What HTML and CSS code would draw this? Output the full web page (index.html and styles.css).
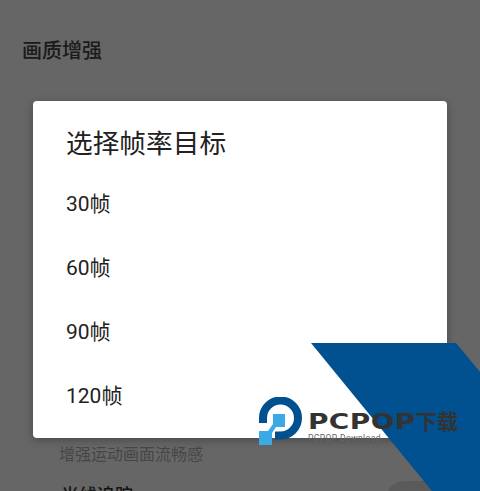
FILE: index.html
```html
<!DOCTYPE html>
<html lang="zh">
<head>
<meta charset="utf-8">
<title>选择帧率目标</title>
<link rel="stylesheet" href="styles.css">
</head>
<body>
<main class="page">
  <h2 class="section">画质增强</h2>
  <div class="rows">
    <span class="toggle toggle-upper"></span>
    <p class="hint">增强运动画面流畅感</p>
    <div class="row">
      <span class="row-title">光线追踪</span>
      <span class="toggle"></span>
    </div>
  </div>
</main>
<div class="scrim"></div>
<section class="dialog">
  <h1 class="dialog-title">选择帧率目标</h1>
  <ul class="options">
    <li class="option">30帧</li>
    <li class="option">60帧</li>
    <li class="option">90帧</li>
    <li class="option">120帧</li>
  </ul>
</section>
<div class="ribbon"></div>
<div class="logo">
  <svg class="mark" width="50" height="52" viewBox="0 0 50 52">
    <path d="M5 26V21A17.500 17.500 0 1 1 22.500 38.500H17" fill="none" stroke="#01508f" stroke-width="8"/>
    <path d="M15 17H27V30H18L14 36V48H1V34H10L15 27Z" fill="#3aa9e6"/>
  </svg>
  <div class="wordmark">
    <div class="brand"><span class="latin"><span class="latin-text">PCPOP</span></span><span>下载</span></div>
    <span class="tagline">PCPOP Download</span>
  </div>
</div>
</body>
</html>
```
FILE: styles.css
```css
* { box-sizing: border-box; }
html, body { margin: 0; height: 100%; overflow: hidden; }
body {
  position: relative;
  width: 480px;
  height: 491px;
  background: #fff;
  font-family: "Noto Sans CJK SC", Roboto, sans-serif;
}
.page { height: 491px; overflow: hidden; padding: 36px 22px 0; }
.section {
  margin: 0;
  font-size: 20px;
  line-height: 28px;
  font-weight: 500;
  color: #444;
}
.rows { display: flex; flex-direction: column; padding: 338px 0 0 37px; }
.hint {
  margin: -1px 0 0;
  font-size: 16px;
  line-height: 24px;
  color: #b0b0b0;
}
.row {
  display: flex;
  justify-content: space-between;
  align-items: flex-start;
  margin-top: 16px;
  padding-left: 2px;
}
.row-title { font-size: 18px; line-height: 26px; font-weight: 500; color: #333; }
.toggle {
  flex: none;
  width: 73px;
  height: 40px;
  border-radius: 20px;
  background: #e1e1e1;
}
.toggle-upper { align-self: flex-end; }
.scrim {
  position: absolute;
  inset: 0;
  background: rgba(0, 0, 0, .6);
}
.dialog {
  position: absolute;
  left: 33px;
  top: 101px;
  width: 414px;
  height: 337px;
  padding: 19px 33px 0;
  background: #fff;
  border-radius: 4px;
  box-shadow: 0 2px 8px rgba(0, 0, 0, .3);
  color: #222;
}
.dialog-title {
  margin: 0;
  font-size: 26.700px;
  line-height: 44px;
  font-weight: 400;
}
.options { margin: 8px 0 0; padding: 0; list-style: none; }
.option {
  height: 64px;
  font-size: 21px;
  line-height: 64px;
  font-family: Roboto, "Noto Sans CJK SC", sans-serif;
}
.ribbon {
  position: absolute;
  left: 311px;
  top: 343px;
  width: 169px;
  height: 148px;
  background: #01508f;
  clip-path: polygon(0 0, 145px 0, 169px 29px, 169px 148px, 121px 148px);
}
.logo {
  position: absolute;
  left: 258px;
  top: 397px;
  display: flex;
}
.mark { display: block; }
.wordmark { display: flex; flex-direction: column; padding-top: 11.500px; }
.brand {
  display: flex;
  font-family: "Noto Sans CJK SC", sans-serif;
  font-size: 21px;
  line-height: 22px;
  font-weight: 700;
  color: #333;
  white-space: nowrap;
}
.latin { display: block; width: 108px; }
.latin-text {
  display: inline-block;
  font-family: "DejaVu Sans", sans-serif;
  letter-spacing: .3px;
  transform: scaleX(1.33);
  transform-origin: left center;
}
.tagline {
  margin-top: 1.500px;
  font-family: Roboto, sans-serif;
  font-size: 8.500px;
  line-height: 8px;
  letter-spacing: .4px;
  color: #666;
  white-space: nowrap;
}
```
